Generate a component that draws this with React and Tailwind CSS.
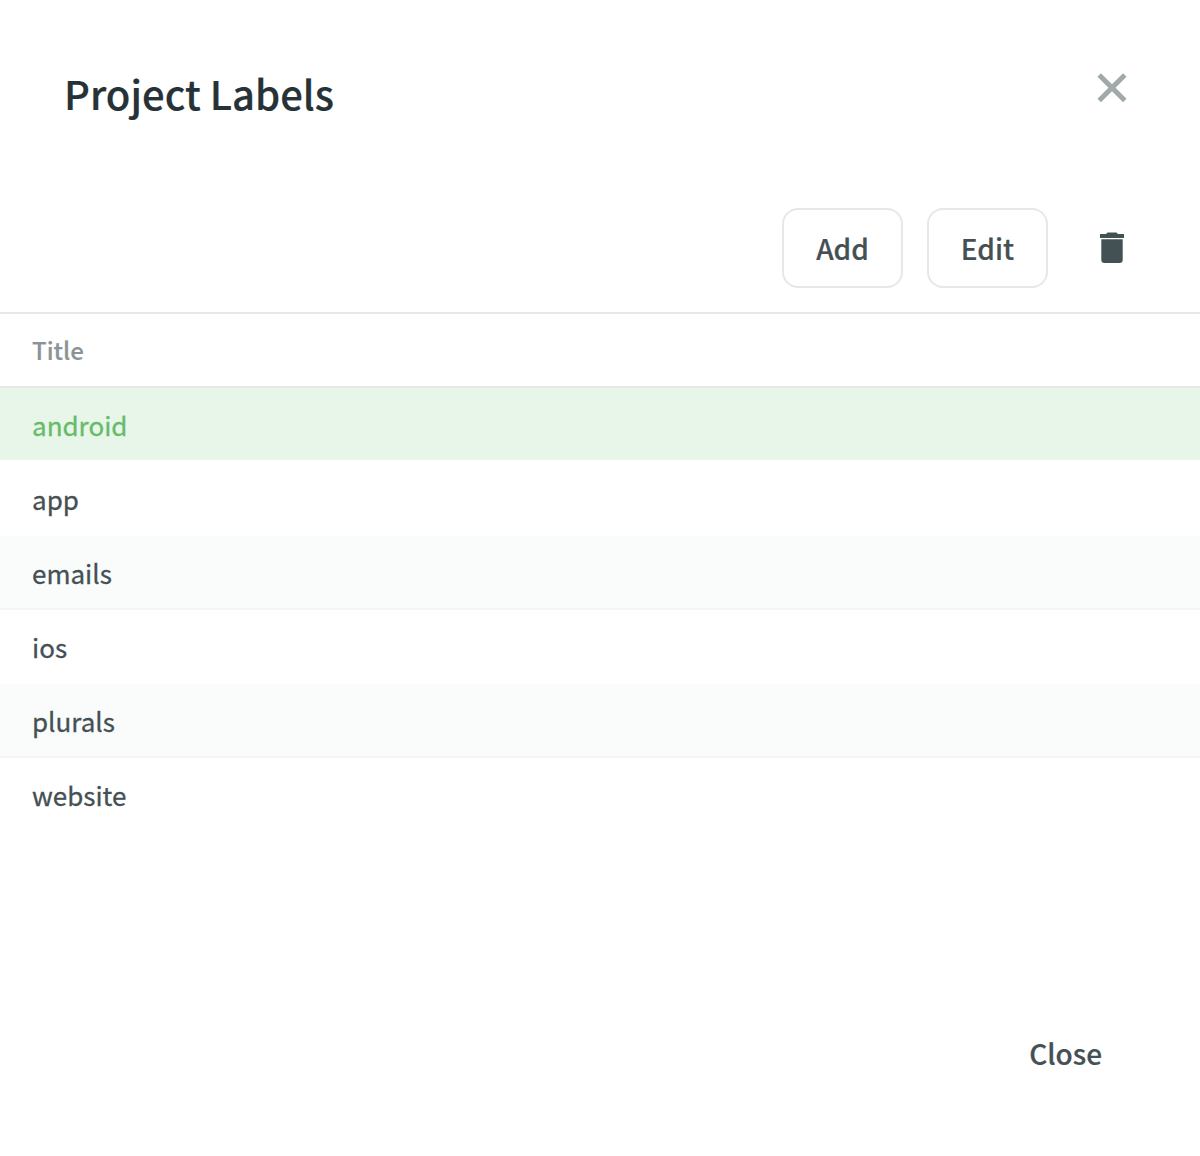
const labels = ["android", "app", "emails", "ios", "plurals", "website"];

function rowStyle(i) {
  if (i === 0) return "bg-[#e8f5e9] text-[#66bb6a] border-white";
  if (i === 2 || i === 4) return "bg-[#fafcfb] border-[#f4f6f6]";
  return "bg-white border-white";
}

export default function App() {
  return (
    <div className="flex h-[1156px] w-[1200px] flex-col bg-white text-[#455054] font-['Noto_Sans_CJK_SC',sans-serif] [-webkit-text-stroke:0.2px]">
      <header className="flex h-[208px] shrink-0 justify-between pl-16 pr-[72px] pt-[61px]">
        <h1 className="h-16 text-[40px] font-medium leading-[64px] text-[#263238]">Project Labels</h1>
        <button aria-label="Close dialog" className="mt-[11px] flex h-8 w-8 items-center justify-center">
          <svg width="32" height="32" viewBox="0 0 32 32" fill="none" stroke="#a2a9ab" strokeWidth="5">
            <path d="M3.200 2.900L28.800 28.500M28.800 2.900L3.200 28.500" />
          </svg>
        </button>
      </header>
      <div className="flex h-[104px] shrink-0 items-start gap-6 pr-[72px] justify-end text-[28px] font-medium">
        <button className="h-20 w-[121px] rounded-2xl border-2 border-[#e6e7e8]">Add</button>
        <button className="h-20 w-[121px] rounded-2xl border-2 border-[#e6e7e8]">Edit</button>
        <button aria-label="Delete" className="ml-6 flex h-20 w-8 items-center justify-center">
          <svg width="24" height="32" viewBox="0 0 24 32" fill="#435054">
            <path d="M0 2.100h6L7.500 0.600h9L18 2.100h6V5.900H0zM1.300 7.200h21.400v20.600a3.200 3.200 0 0 1-3.200 3.200H4.500a3.200 3.200 0 0 1-3.200-3.200z" />
          </svg>
        </button>
      </div>
      <div className="flex h-[76px] shrink-0 items-center border-y-2 border-[#e6e7e8] px-8 text-[24px] font-medium text-[#8c9396]">Title</div>
      <ul className="text-[26px] [-webkit-text-stroke:0.3px]">
        {labels.map((label, i) => (
          <li key={label} className={`flex h-[74px] items-center border-b-2 px-8 pt-px ${rowStyle(i)}`}>{label}</li>
        ))}
      </ul>
      <footer className="mt-auto flex h-[142px] items-start justify-end pr-[98px] text-[28px] font-medium">
        <button className="h-[78px]">Close</button>
      </footer>
    </div>
  );
}
